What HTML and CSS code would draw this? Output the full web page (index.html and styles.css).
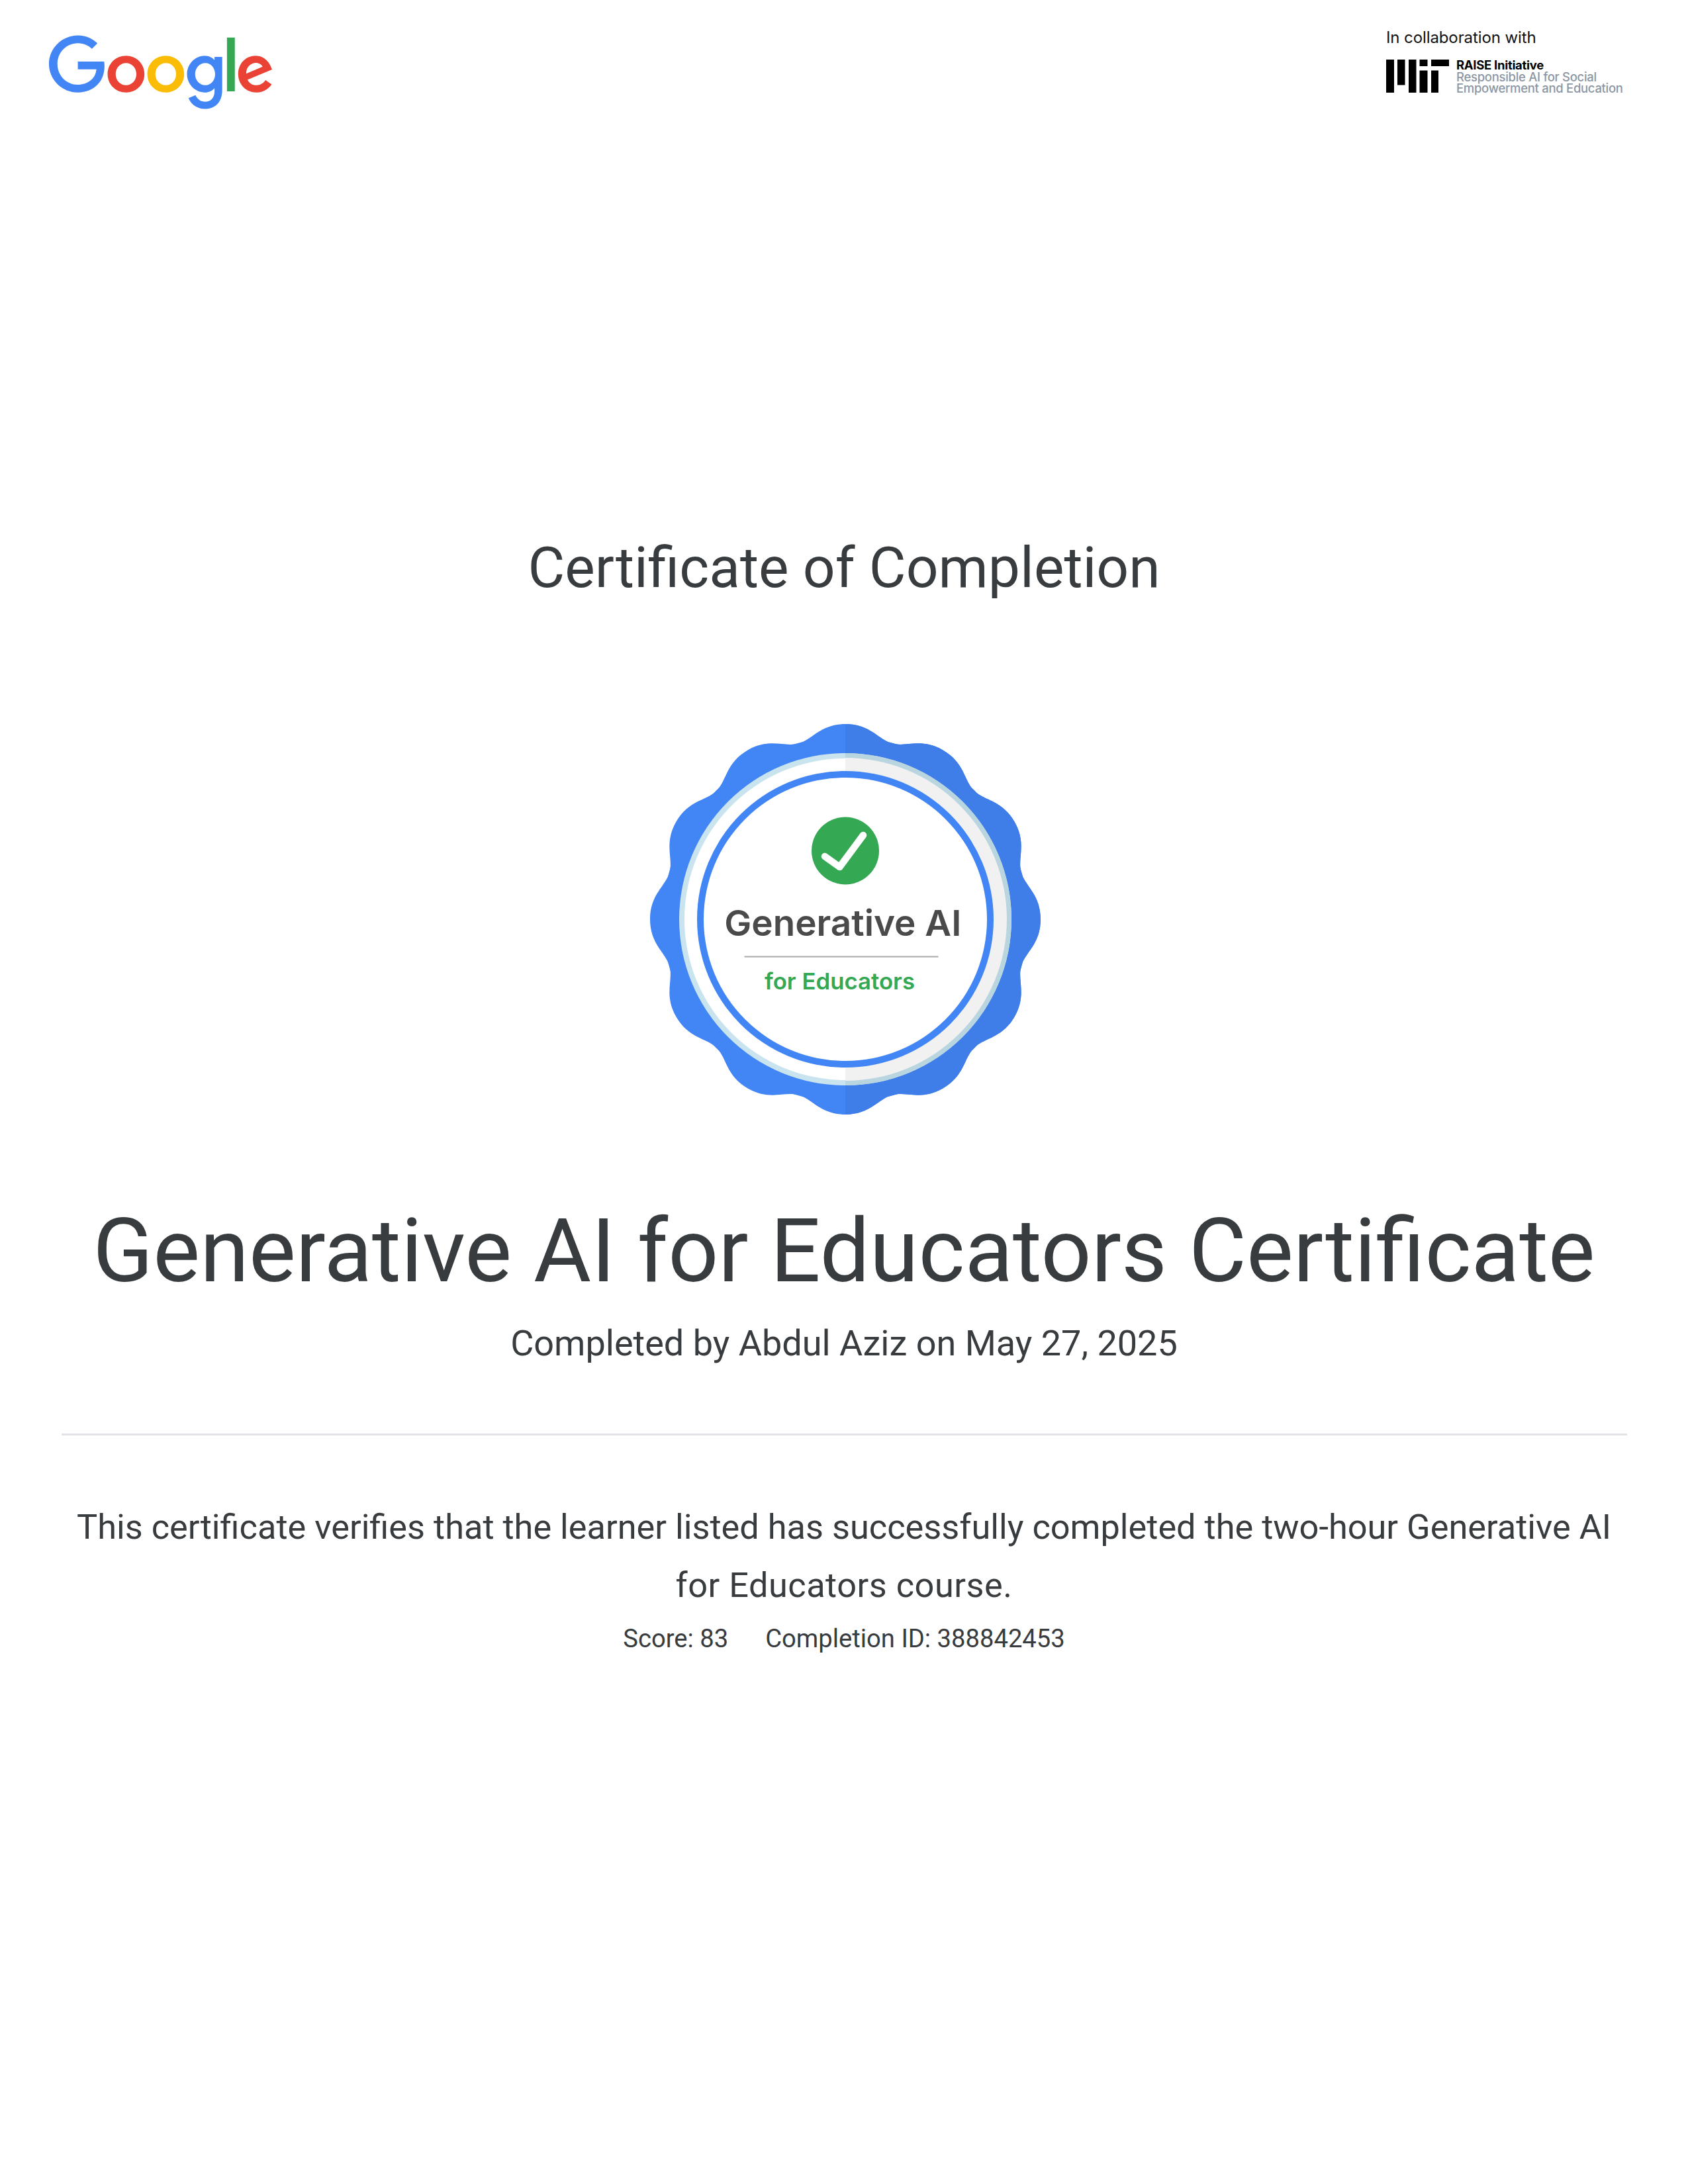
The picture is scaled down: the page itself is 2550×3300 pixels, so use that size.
FILE: index.html
```html
<!DOCTYPE html>
<html lang="en">
<head>
<meta charset="utf-8">
<title>Certificate of Completion</title>
<link rel="stylesheet" href="styles.css">
</head>
<body>
<div class="page">
  <header class="top">
    <svg class="google" viewBox="0 0 272 92" aria-label="Google">
      <path fill="#EA4335" d="M115.75 47.18c0 12.77-9.99 22.18-22.25 22.18s-22.25-9.41-22.25-22.18C71.25 34.32 81.24 25 93.5 25s22.25 9.32 22.25 22.18zm-9.74 0c0-7.98-5.79-13.44-12.51-13.44S80.99 39.2 80.99 47.18c0 7.9 5.79 13.44 12.51 13.44s12.51-5.55 12.51-13.44z"/>
      <path fill="#FBBC05" d="M163.75 47.18c0 12.77-9.99 22.18-22.25 22.18s-22.25-9.41-22.25-22.18c0-12.85 9.99-22.18 22.25-22.18s22.25 9.32 22.25 22.18zm-9.74 0c0-7.98-5.79-13.44-12.51-13.44s-12.51 5.46-12.51 13.44c0 7.9 5.79 13.44 12.51 13.44s12.51-5.55 12.51-13.44z"/>
      <path fill="#4285F4" d="M209.75 26.34v39.82c0 16.38-9.66 23.07-21.08 23.07-10.75 0-17.22-7.19-19.66-13.07l8.48-3.53c1.51 3.61 5.21 7.87 11.17 7.87 7.31 0 11.84-4.51 11.84-13v-3.19h-.34c-2.18 2.69-6.38 5.04-11.68 5.04-11.09 0-21.25-9.66-21.25-22.09 0-12.52 10.16-22.26 21.25-22.26 5.29 0 9.49 2.35 11.68 4.96h.34v-3.61h9.25zm-8.56 20.92c0-7.81-5.21-13.52-11.84-13.52-6.72 0-12.35 5.71-12.35 13.52 0 7.73 5.63 13.36 12.35 13.36 6.63 0 11.84-5.63 11.84-13.36z"/>
      <path fill="#34A853" d="M225 3v65h-9.5V3h9.5z"/>
      <path fill="#EA4335" d="M262.02 54.48l7.56 5.04c-2.44 3.61-8.32 9.83-18.48 9.83-12.6 0-22.01-9.74-22.01-22.18 0-13.19 9.49-22.18 20.92-22.18 11.51 0 17.14 9.16 18.98 14.11l1.01 2.52-29.65 12.28c2.27 4.45 5.8 6.72 10.75 6.72 4.96 0 8.4-2.44 10.92-6.14zm-23.27-7.98l19.82-8.23c-1.09-2.77-4.37-4.7-8.23-4.7-4.95 0-11.84 4.37-11.59 12.93z"/>
      <path fill="#4285F4" d="M35.29 41.41V32H67c.31 1.64.47 3.58.47 5.68 0 7.06-1.93 15.79-8.15 22.01-6.05 6.3-13.78 9.66-24.02 9.66C16.32 69.35.36 53.89.36 34.91.36 15.93 16.32.47 35.3.47c10.5 0 17.98 4.12 23.6 9.49l-6.64 6.64c-4.03-3.78-9.49-6.72-16.97-6.72-13.86 0-24.7 11.17-24.7 25.03 0 13.86 10.84 25.03 24.7 25.03 8.99 0 14.11-3.61 17.39-6.89 2.66-2.66 4.41-6.46 5.1-11.65l-22.49.01z"/>
    </svg>
    <div class="collab">
      <div class="collab-label">In collaboration with</div>
      <div class="collab-row">
        <svg class="mit" viewBox="0 0 95 50" aria-label="MIT">
          <rect x="0" y="0" width="12" height="50"/>
          <rect x="17" y="0" width="11.5" height="38.5"/>
          <rect x="34" y="0" width="11.5" height="50"/>
          <rect x="50.5" y="0" width="12" height="10"/>
          <rect x="50.5" y="16.5" width="12" height="33.5"/>
          <rect x="68" y="0" width="27" height="10"/>
          <rect x="68" y="16.5" width="11" height="33.5"/>
        </svg>
        <div class="raise">
          <div class="raise-name">RAISE Initiative</div>
          <div class="raise-sub">Responsible AI for Social</div>
          <div class="raise-sub">Empowerment and Education</div>
        </div>
      </div>
    </div>
  </header>
  <main class="body">
    <h2 class="kicker">Certificate of Completion</h2>
    <svg class="badge" viewBox="-297 -297 594 594" aria-label="Generative AI for Educators badge">
      <defs>
        <path id="lobe" d="M-71-265.6C-50-271.2-38-295 0-295S50-271.2 71-265.6L0-200Z"/>
        <g id="lobes3">
          <use href="#lobe"/>
          <use href="#lobe" transform="rotate(30)"/>
          <use href="#lobe" transform="rotate(60)"/>
        </g>
        <g id="seal">
          <circle r="275.5"/>
          <use href="#lobes3"/>
          <use href="#lobes3" transform="rotate(90)"/>
          <use href="#lobes3" transform="rotate(180)"/>
          <use href="#lobes3" transform="rotate(270)"/>
        </g>
        <clipPath id="right-half"><rect x="0" y="-297" width="297" height="594"/></clipPath>
      </defs>
      <use href="#seal" class="seal-left"/>
      <use href="#seal" class="seal-right" clip-path="url(#right-half)"/>
      <circle r="251" class="rim-left"/>
      <circle r="243" class="face"/>
      <g clip-path="url(#right-half)">
        <circle r="251" class="rim-right"/>
        <circle r="244" class="face-right"/>
      </g>
      <circle r="224" class="inner-ring"/>
      <circle r="214" class="ring-line"/>
      <circle cx="0" cy="-103.5" r="51" class="tick-disc"/>
      <path d="M-31-95-8.6-79 27-127" class="tick"/>
      <text x="-3.7" y="24.5" text-anchor="middle" class="badge-title" textLength="358" lengthAdjust="spacingAndGlyphs">Generative AI</text>
      <rect x="-152.5" y="55.5" width="293" height="2" class="badge-line"/>
      <text x="-8.5" y="105.5" text-anchor="middle" class="badge-sub" textLength="227" lengthAdjust="spacingAndGlyphs">for Educators</text>
    </svg>
    <h1 class="title">Generative AI for Educators Certificate</h1>
    <p class="byline">Completed by Abdul Aziz on May 27, 2025</p>
    <hr class="rule">
    <p class="statement">This certificate verifies that the learner listed has successfully completed the two-hour Generative AI<br><span class="statement-tail">for Educators course.</span></p>
    <p class="meta"><span>Score: 83</span><span>Completion ID: 388842453</span></p>
  </main>
</div>
</body>
</html>
```
FILE: styles.css
```css
* { box-sizing: border-box; }
html, body { margin: 0; background: #fff; }
.page {
  width: 2550px;
  height: 3300px;
  font-family: Roboto, "Liberation Sans", sans-serif;
  color: #383c3e;
  overflow: hidden;
}
.top {
  display: flex;
  justify-content: space-between;
  align-items: flex-start;
  padding: 53px 97px 0 73px;
  height: 300px;
}
.google { width: 341px; height: 115px; display: block; }
.collab { margin-top: -10px; width: 359px; }
.collab-label {
  font-family: Inter, "Liberation Sans", sans-serif;
  font-size: 24px;
  line-height: 28px;
  color: #111;
  letter-spacing: -0.1px;
}
.collab-row { display: flex; gap: 11px; margin-top: 19px; }
.mit { width: 95px; height: 50px; display: block; fill: #000; flex: none; }
.raise {
  font-family: Inter, "Liberation Sans", sans-serif;
  font-size: 18.5px;
  font-weight: 500;
  line-height: 17.5px;
  letter-spacing: -0.3px;
  white-space: nowrap;
}
.raise-name { color: #000; font-weight: 700; }
.raise-sub { color: #8b97a4; }
.body {
  display: flex;
  flex-direction: column;
  align-items: center;
  text-align: center;
}
.kicker {
  margin: 508px 0 0;
  font-weight: 400;
  font-size: 85.8px;
  line-height: 100px;
}
.badge { width: 594px; height: 594px; display: block; margin: 184px 0 0 3px; flex: none; }
.seal-left { fill: #4285f4; }
.seal-right { fill: #3f7de8; }
.rim-left { fill: #c9e4ee; }
.face { fill: #fff; }
.rim-right { fill: #b9d5df; }
.face-right { fill: #f1f1f1; }
.inner-ring { fill: #4285f4; }
.ring-line { fill: #fff; }
.tick-disc { fill: #34a853; }
.tick {
  fill: none;
  stroke: #fff;
  stroke-width: 10.5;
  stroke-linecap: round;
  stroke-linejoin: round;
}
.badge-title { font-family: Inter, "Liberation Sans", sans-serif; font-weight: 600; font-size: 54px; fill: #4a4a4a; }
.badge-line { fill: #a9a9a9; }
.badge-sub { font-family: Inter, "Liberation Sans", sans-serif; font-weight: 600; font-size: 34px; fill: #34a853; }
.title {
  margin: 125px 0 0;
  font-weight: 400;
  font-size: 133.6px;
  line-height: 160px;
  white-space: nowrap;
}
.byline {
  margin: 24px 0 0;
  font-size: 54px;
  line-height: 70px;
}
.rule {
  width: 2365px;
  height: 3px;
  border: 0;
  background: #e1e3e6;
  margin: 101px 0 0;
}
.statement {
  margin: 94px 0 0;
  font-size: 52.3px;
  line-height: 88px;
  white-space: nowrap;
}
.statement-tail { letter-spacing: 0.5px; }
.meta {
  display: flex;
  gap: 56px;
  margin: 9px 0 0;
  font-size: 38.2px;
  line-height: 56px;
}
```
